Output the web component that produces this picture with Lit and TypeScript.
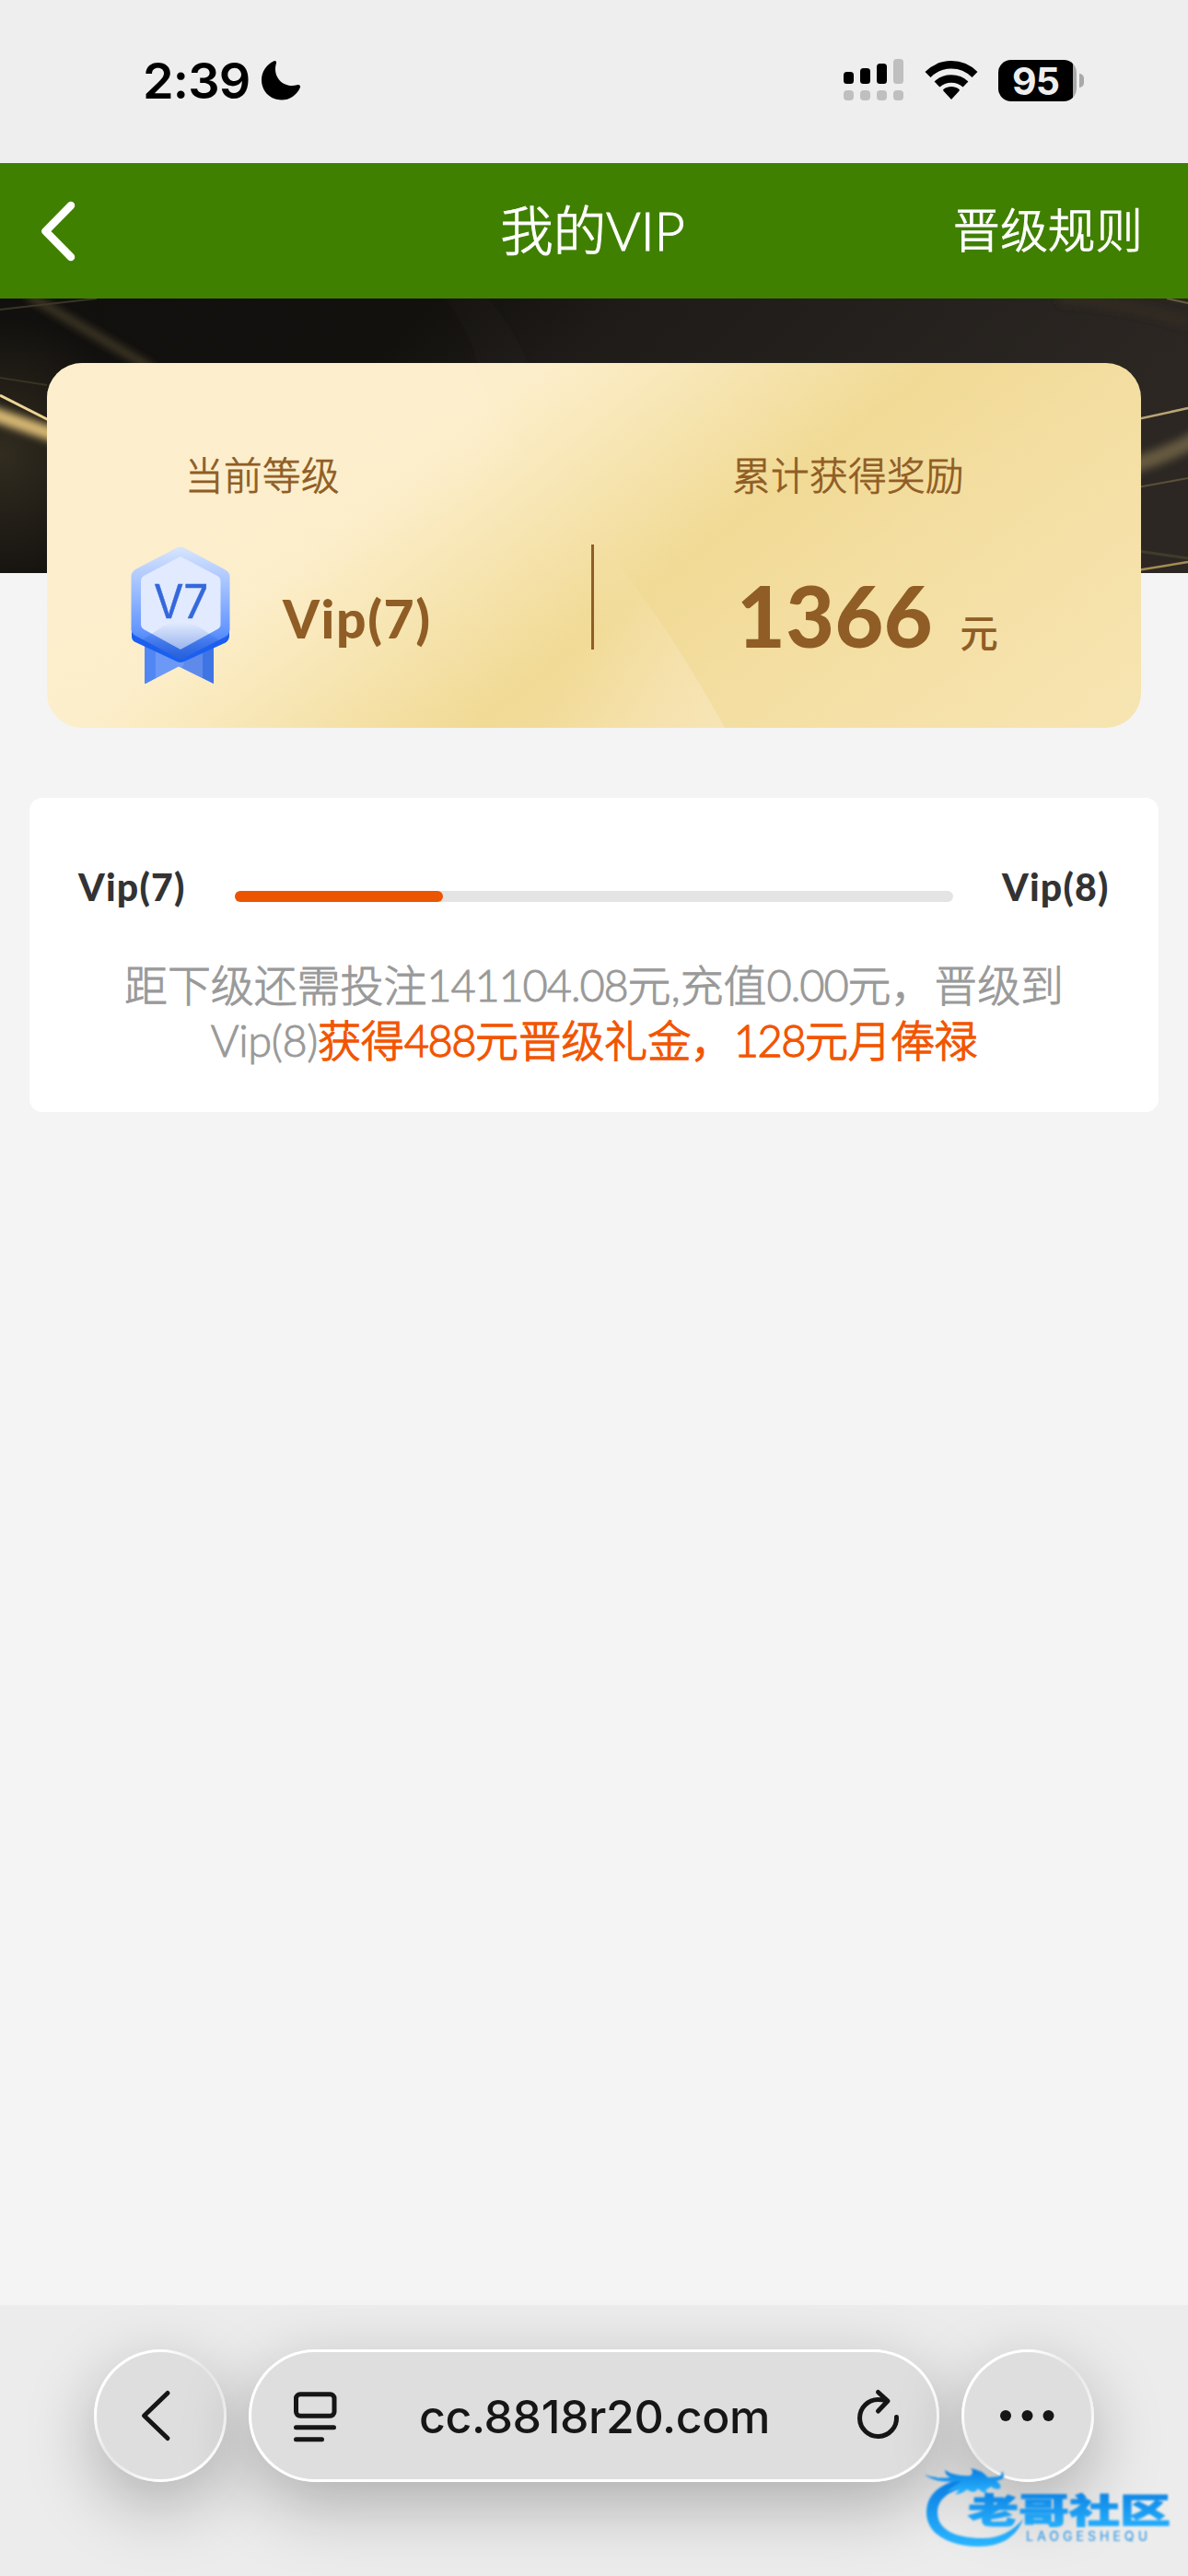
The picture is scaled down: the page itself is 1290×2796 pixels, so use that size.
import { LitElement, html, svg, css } from "lit";
import { customElement, property } from "lit/decorators.js";

@customElement("status-bar")
class StatusBar extends LitElement {
  static styles = css`
    :host {
      display: flex;
      justify-content: space-between;
      height: 177px;
      padding: 0 113px 0 155px;
      box-sizing: border-box;
      background: #eeeeee;
      color: #000;
      font-family: Inter, "Liberation Sans", sans-serif;
    }
    .left, .right { display: flex; height: 46px; margin-top: 64px; align-items: center; }
    .time { padding-top: 2px; font-size: 54px; font-weight: 600; letter-spacing: -0.8px; line-height: 46px; width: 128px; }
    .moon { display: block; }
    .signal { margin-right: 22px; }
    .wifi { margin-right: 22px; }
    .battery {
      width: 85px;
      height: 45px;
      padding-right: 4px;
      box-sizing: border-box;
      border-radius: 14px;
      background: linear-gradient(90deg, #000 81px, #a9a9a9 81px);
      color: #eee;
      font-size: 41px;
      font-weight: 700;
      line-height: 46px;
      text-align: center;
      letter-spacing: -1px;
    }
    .tip { width: 5px; height: 15px; margin-left: 3px; border-radius: 0 5px 5px 0; background: #a9a9a9; }
  `;

  render() {
    return html`
      <div class="left">
        <span class="time">2:39</span>
        <svg class="moon" width="44" height="44" viewBox="0 0 44 44">
          <path d="M14.5 1.2C16 .4 17.6 1.6 17 3.4C12.500 18 24 31 39.500 27.300C42 26.500 43.800 28 42.800 30.200C39 38.500 31.500 43.500 22.800 43.500C10.500 43.500 1 34 1 21.800C1 12.500 6.500 4.800 14.500 1.200Z"/>
        </svg>
      </div>
      <div class="right">
        <svg class="signal" width="66" height="46" viewBox="0 0 66 46">
          <rect x="0" y="14" width="11" height="13" rx="3.500"/>
          <rect x="18" y="10" width="11" height="17" rx="3.500"/>
          <rect x="36" y="5" width="11" height="22" rx="3.500"/>
          <rect x="54" y="0" width="11" height="27" rx="3.500" fill="#bfbfbf"/>
          ${[0, 18, 36, 54].map(x => svg`<rect x=${x} y="34" width="11" height="11" rx="4" fill="#bfbfbf"/>`)}
        </svg>
        <svg class="wifi" width="58" height="44" viewBox="0 0 58 44">
          <path d="M29 43L20.500 33.800C20 33.200 20 32.300 20.700 31.800C25.500 28.200 32.500 28.200 37.300 31.800C38 32.300 38 33.200 37.500 33.800Z"/>
          <path d="M13.500 26.500C22 18.500 36 18.500 44.500 26.500" fill="none" stroke="#000" stroke-width="8.500"/>
          <path d="M3.500 16C18 1.800 40 1.800 54.500 16" fill="none" stroke="#000" stroke-width="8.500"/>
        </svg>
        <div class="battery">95</div>
        <div class="tip"></div>
      </div>
    `;
  }
}

@customElement("vip-medal")
class VipMedal extends LitElement {
  static styles = css`
    :host { display: block; }
    svg { display: block; }
    text { font-family: Inter, "Liberation Sans", sans-serif; font-size: 50px; fill: #3468dc; stroke: #3468dc; stroke-width: 0.5px; }
  `;

  @property() label = "";

  render() {
    return html`
      <svg width="108" height="150" viewBox="0 0 108 150">
        <defs>
          <linearGradient id="rim" x1="0" y1="0" x2="0" y2="1">
            <stop offset="0" stop-color="#d8e6fd"/>
            <stop offset=".25" stop-color="#b2cbfe"/>
            <stop offset=".75" stop-color="#6396ff"/>
            <stop offset="1" stop-color="#2f69e6"/>
          </linearGradient>
          <linearGradient id="shade" x1="0" y1="0" x2="0" y2="1">
            <stop offset="0" stop-color="#2058cf" stop-opacity="0"/>
            <stop offset="1" stop-color="#2058cf" stop-opacity=".5"/>
          </linearGradient>
        </defs>
        <path d="M15 100H90V149L52 130.500L16 149Q15 149 15 148Z" fill="#6c99f5"/>
        <path d="M15 100H27V143L16 149Q15 149 15 148Z" fill="#5187f5"/>
        <path d="M62 115H78V143L56 132Z" fill="#5e8aea"/>
        <path d="M78 100H90V149L78 143Z" fill="#3f74e4"/>
        <path d="M1 92L54 92H107V97Q107 102 103 104.500L58 125Q54 127 50 125L5 104Q1 102 1 98Z" fill="#1b5ff0"/>
        <path d="M50 1.500Q54 -.5 58 1.500L102 25Q107.500 28 107.500 33V90Q107.500 95 103 98L58 121Q54 123 50 121L5 97Q.5 94 .5 90V33Q.5 28 5 25Z" fill="url(#rim)"/>
        <path d="M54 11L94 32Q97.500 34 97.500 38V85Q97.500 88 94 90L54 112L14 90Q11 88 11 85V38Q11 34 14 32Z" fill="#e1eafe"/>
        <path d="M12 102L36 86Q54 80 72 86L96 102L58 121Q54 123 50 121Z" fill="url(#shade)"/>
        <text x="25" y="77.500" textLength="59" lengthAdjust="spacingAndGlyphs">${this.label}</text>
      </svg>
    `;
  }
}

@customElement("vip-summary")
class VipSummary extends LitElement {
  static styles = css`
    :host {
      display: block;
      position: relative;
      height: 466px;
      padding: 70px 51px 0;
      box-sizing: border-box;
      font-family: Lato, "Noto Sans CJK SC", sans-serif;
      color: #8f5d25;
    }
    .backdrop { position: absolute; left: 0; top: 0; display: block; }
    .card {
      position: relative;
      display: grid;
      grid-template-columns: 591px 3px 1fr;
      height: 396px;
      border-radius: 38px;
      overflow: hidden;
      background: linear-gradient(142deg, #fceeca 0%, #fceeca 32%, #f7e6b4 43%, #f1da95 57%, #f3dd9f 68%, #f7e5b2 100%);
    }
    .facets { position: absolute; left: 0; top: 0; }
    .col { position: relative; }
    .label {
      height: 60px;
      margin-top: 92px;
      padding-left: 150px;
      font-size: 41.600px;
      font-weight: 300;
      line-height: 60px;
      letter-spacing: 0.4px;
      -webkit-text-stroke: 0.8px #8f5d25;
    }
    .row { display: flex; }
    .level .row { padding-left: 91px; margin-top: 47px; }
    .name { margin: 44px 0 0 57px; font-size: 57px; line-height: 68px; font-weight: 900; letter-spacing: 1.600px; white-space: nowrap; }
    .divider { position: relative; height: 114px; margin-top: 197px; background: #8f5d25; }
    .reward .row { padding-left: 155px; margin-top: 67px; align-items: baseline; }
    .amount { font-size: 91px; line-height: 110px; font-weight: 900; letter-spacing: 0.5px; }
    .unit { margin-left: 29px; font-size: 41.600px; font-weight: 500; }
  `;

  @property() level = "";
  @property() amount = "";

  render() {
    return html`
      <svg class="backdrop" width="1290" height="298" viewBox="0 0 1290 298">
        <defs>
          <linearGradient id="dark" x1="0" y1="0" x2="1" y2=".25">
            <stop offset="0" stop-color="#11100e"/>
            <stop offset=".35" stop-color="#13110e"/>
            <stop offset=".5" stop-color="#1e1b18"/>
            <stop offset="1" stop-color="#2c2723"/>
          </linearGradient>
          <radialGradient id="warm" cx="0" cy="170" r="150" gradientUnits="userSpaceOnUse">
            <stop offset="0" stop-color="#3a3324" stop-opacity=".8"/>
            <stop offset="1" stop-color="#3a3324" stop-opacity="0"/>
          </radialGradient>
          <filter id="soft" x="-50%" y="-100%" width="200%" height="300%"><feGaussianBlur stdDeviation="4"/></filter>
        </defs>
        <rect width="1290" height="298" fill="url(#dark)"/>
        <rect width="160" height="298" fill="url(#warm)"/>
        <path d="M484 0Q512 40 518 70H573Q560 35 530 0Z" fill="#fff" opacity=".015"/>
        <g fill="none">
          <path d="M0 12L105 0" stroke="#3a3529" stroke-width="2"/>
          <path d="M30 -4L165 76" stroke="#403825" stroke-width="9" filter="url(#soft)"/>
          <path d="M0 86L51 94" stroke="#3a3222" stroke-width="2"/>
          <path d="M0 105L55 133" stroke="#f0d596" stroke-width="3"/>
          <path d="M-20 121L70 152" stroke="#d9ba75" stroke-width="15" filter="url(#soft)"/>
          <path d="M1150 0Q1230 6 1290 26" stroke="#322c23" stroke-width="12" filter="url(#soft)"/>
          <path d="M1267 0L1290 5" stroke="#6a5d3e" stroke-width="2"/>
          <path d="M1235 131L1290 119" stroke="#b9a674" stroke-width="2.500"/>
          <path d="M1220 184Q1260 174 1310 147" stroke="#665a3f" stroke-width="17" filter="url(#soft)"/>
          <path d="M1235 205L1290 195" stroke="#5a503a" stroke-width="2"/>
          <path d="M1235 274L1290 282" stroke="#413b2a" stroke-width="3"/>
          <path d="M1235 295L1290 286" stroke="#a58c53" stroke-width="2.500"/>
        </g>
      </svg>
      <div class="card">
        <svg class="facets" width="1188" height="396" viewBox="0 0 1188 396">
          <defs>
            <linearGradient id="f1" x1="463" y1="0" x2="530" y2="115" gradientUnits="userSpaceOnUse">
              <stop offset="0" stop-color="#fdefce" stop-opacity=".6"/>
              <stop offset="1" stop-color="#fdefce" stop-opacity="0"/>
            </linearGradient>
            <linearGradient id="f2" x1="736" y1="396" x2="560" y2="330" gradientUnits="userSpaceOnUse">
              <stop offset="0" stop-color="#f9e9c4" stop-opacity=".6"/>
              <stop offset="1" stop-color="#f9e9c4" stop-opacity="0"/>
            </linearGradient>
          </defs>
          <path d="M0 0H463Q480 45 540 130L300 396H0Z" fill="url(#f1)"/>
          <path d="M300 396L560 150Q650 240 736 396Z" fill="url(#f2)"/>
        </svg>
        <div class="col level">
          <div class="label">当前等级</div>
          <div class="row">
            <vip-medal label="V7"></vip-medal>
            <div class="name">${this.level}</div>
          </div>
        </div>
        <div class="divider"></div>
        <div class="col reward">
          <div class="label">累计获得奖励</div>
          <div class="row">
            <span class="amount">${this.amount}</span>
            <span class="unit">元</span>
          </div>
        </div>
      </div>
    `;
  }
}

@customElement("vip-progress")
class VipProgress extends LitElement {
  static styles = css`
    :host {
      display: block;
      height: 341px;
      margin: 76px 32px 0;
      padding: 70px 53px 0;
      box-sizing: border-box;
      border-radius: 14px;
      background: #fff;
      font-family: Lato, "Noto Sans CJK SC", sans-serif;
    }
    .levels { display: flex; height: 54px; align-items: center; color: #333; }
    .name { width: 116px; font-size: 41px; line-height: 54px; font-weight: 900; letter-spacing: 1.200px; white-space: nowrap; }
    .track { width: 780px; height: 12px; margin: 20px 53px 0 54px; border-radius: 6px; background: #e4e4e4; }
    .fill { height: 12px; border-radius: 6px; background: #ec5500; }
    .hint {
      margin-top: 49px;
      font-size: 47px;
      line-height: 60px;
      font-weight: 300;
      letter-spacing: -0.1px;
      text-align: center;
      white-space: nowrap;
      color: #999;
      -webkit-text-stroke: 0.9px #999;
    }
    .gift { color: #f25500; letter-spacing: -0.2px; -webkit-text-stroke: 1.300px #f25500; }
    .num { letter-spacing: -1.200px; }
    .gift .num { letter-spacing: -1.500px; }
    .next { letter-spacing: -0.4px; }
  `;

  @property() from = "";
  @property() to = "";
  @property({ type: Number }) percent = 0;

  render() {
    return html`
      <div class="levels">
        <span class="name">${this.from}</span>
        <div class="track"><div class="fill" style="width: ${this.percent}%"></div></div>
        <span class="name">${this.to}</span>
      </div>
      <div class="hint">
        距下级还需投注<span class="num">141104.08</span>元,充值<span class="num">0.00</span>元，晋级到<br>
        <span class="next">${this.to}</span><span class="gift">获得<span class="num">488</span>元晋级礼金，<span class="num">128</span>元月俸禄</span>
      </div>
    `;
  }
}

@customElement("browser-bar")
class BrowserBar extends LitElement {
  static styles = css`
    :host {
      display: block;
      position: relative;
      height: 294px;
      padding: 48px 102px 0;
      box-sizing: border-box;
      background: #ececec;
      color: #161616;
      font-family: Inter, "Liberation Sans", sans-serif;
    }
    .bar { display: flex; justify-content: space-between; }
    .glass {
      display: flex;
      align-items: center;
      justify-content: center;
      width: 144px;
      height: 144px;
      box-sizing: border-box;
      border: 3px solid transparent;
      border-radius: 72px;
      background:
        linear-gradient(#dedede, #dedede) padding-box,
        linear-gradient(140deg, #fff 0%, #fff 30%, #e6e6e6 50%, #fff 72%, #fff 100%) border-box;
      box-shadow: 0 24px 76px rgba(0, 0, 0, 0.27);
    }
    .round {
      background:
        linear-gradient(#dedede, #dedede) padding-box,
        conic-gradient(from 0deg, #fff 0deg, #e6e6e6 45deg, #fff 110deg, #fff 180deg, #e6e6e6 230deg, #fff 275deg, #fff 360deg) border-box;
    }
    .address {
      width: 750px;
      padding: 0 38px 0 45px;
      justify-content: space-between;
      background:
        linear-gradient(#dedede, #dedede) padding-box,
        linear-gradient(#fff, #fff) border-box;
    }
    .url { margin-right: 6px; padding-top: 2px; font-size: 50px; line-height: 60px; font-weight: 500; letter-spacing: -0.4px; }
    svg { display: block; fill: none; stroke: #161616; stroke-width: 5; stroke-linecap: round; stroke-linejoin: round; }
    .dots { fill: #161616; stroke: none; }
    .brand { position: absolute; left: 1000px; top: 175px; stroke: none; filter: blur(0.8px); }
    .brand-name { font: 900 37px "Noto Sans CJK SC", sans-serif; fill: url(#blue); stroke: url(#blue); stroke-width: 1; }
    .brand-sub { font: 500 14px Inter, sans-serif; fill: #3f9fe6; }
  `;

  render() {
    return html`
      <div class="bar">
        <div class="glass round">
          <svg width="44" height="60" viewBox="0 0 44 60"><path d="M30 5.500L4.500 30L30 54.500"/></svg>
        </div>
        <div class="glass address">
          <svg width="50" height="60" viewBox="0 0 50 60">
            <rect x="3.500" y="6.800" width="41.500" height="23.500" rx="4.500"/>
            <path d="M3.500 42.700H44.500M3.500 55.700H31.500"/>
          </svg>
          <span class="url">cc.8818r20.com</span>
          <svg width="50" height="60" viewBox="0 0 50 60">
            <path d="M44.500 31.500A20 20 0 1 1 24.500 12.500Q29 12.500 34 14M24.500 4.500L35 14L24.500 25"/>
          </svg>
        </div>
        <div class="glass round">
          <svg class="dots" width="60" height="14" viewBox="0 0 60 14">
            <circle cx="6" cy="7" r="6"/>
            <circle cx="29.500" cy="7" r="6"/>
            <circle cx="52.500" cy="7" r="6"/>
          </svg>
        </div>
      </div>
      <svg class="brand" width="275" height="95" viewBox="0 0 275 95">
        <defs>
          <linearGradient id="blue" x1="0" y1="0" x2="0" y2="1">
            <stop offset="0" stop-color="#087be0"/>
            <stop offset="1" stop-color="#2ab6ff"/>
          </linearGradient>
        </defs>
        <g fill="url(#blue)" stroke="none">
          <path d="M48 13C20 18 6 31 6 50C6 73 30 87 63 87C88 87 104 76 111 57C99 71 85 78 67 78C38 78 18 69 18 50C18 36 30 27 48 23Z"/>
          <path d="M4 9Q16 14 32 12Q26 9 26 4Q36 11 54 10Q58 6 54 2Q66 4 73 12L85 11Q88 9 88 5Q92 11 88 14L82 16Q88 20 86 24Q81 26 76 22L70 26L73 29Q66 29 62 24Q58 31 50 25Q44 31 37 30Q42 27 40 24Q34 27 28 27L44 16Q16 19 4 9Z"/>
        </g>
        <text class="brand-name" x="51" y="62" textLength="220" lengthAdjust="spacingAndGlyphs">老哥社区</text>
        <text class="brand-sub" x="114" y="80.500" textLength="132">LAOGESHEQU</text>
      </svg>
    `;
  }
}

@customElement("app-root")
class AppRoot extends LitElement {
  static styles = css`
    :host {
      display: flex;
      flex-direction: column;
      width: 1290px;
      height: 2796px;
      overflow: hidden;
      background: #f4f4f4;
    }
    .nav {
      display: grid;
      grid-template-columns: 1fr auto 1fr;
      align-items: center;
      height: 147px;
      padding: 0 49px 0 43px;
      box-sizing: border-box;
      background: #408000;
      color: #fff;
      font-family: Lato, "Noto Sans CJK SC", sans-serif;
      font-weight: 300;
      white-space: nowrap;
      -webkit-text-stroke: 1px #fff;
    }
    .back { display: block; fill: none; stroke: #fff; stroke-width: 8.500; stroke-linecap: round; stroke-linejoin: round; }
    .title { padding: 0 0 1px 3px; font-size: 57.500px; line-height: 80px; letter-spacing: -0.1px; }
    .rules { padding-bottom: 4px; font-size: 51.600px; line-height: 80px; text-align: right; }
    browser-bar { margin-top: auto; }
  `;

  render() {
    return html`
      <status-bar></status-bar>
      <div class="nav">
        <svg class="back" width="44" height="66" viewBox="0 0 44 66"><path d="M34 5L6.500 33L34 61"/></svg>
        <span class="title">我的VIP</span>
        <span class="rules">晋级规则</span>
      </div>
      <vip-summary level="Vip(7)" amount="1366"></vip-summary>
      <vip-progress from="Vip(7)" to="Vip(8)" percent="29"></vip-progress>
      <browser-bar></browser-bar>
    `;
  }
}
